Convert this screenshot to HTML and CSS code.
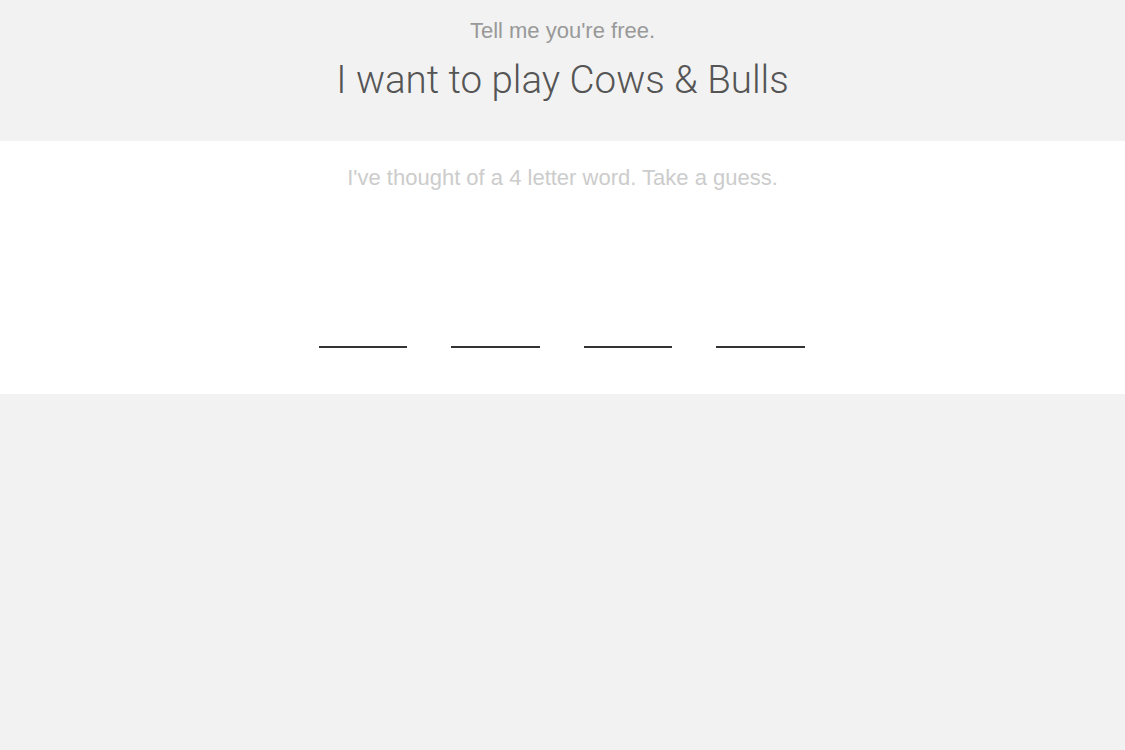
FILE: index.html
```html
<!DOCTYPE html>
<html>
<head>
<meta charset="utf-8">
<link rel="stylesheet" href="styles.css">
</head>
<body>
<header class="header">
  <p class="tagline">Tell me you're free.</p>
  <h1 class="title">I want to play Cows &amp; Bulls</h1>
</header>
<main class="game">
  <p class="prompt">I've thought of a 4 letter word. Take a guess.</p>
  <div class="slots">
    <span class="slot"></span>
    <span class="slot"></span>
    <span class="slot"></span>
    <span class="slot"></span>
  </div>
</main>
</body>
</html>
```
FILE: styles.css
```css
html, body {
  margin: 0;
  padding: 0;
  background: #f2f2f2;
  font-family: "Liberation Sans", Arial, sans-serif;
}
.header {
  height: 141px;
  box-sizing: border-box;
  padding-top: 17px;
  text-align: center;
}
.tagline {
  margin: 0;
  font-size: 22px;
  line-height: 28px;
  color: #999;
}
.title {
  margin: 11px 0 0;
  font-family: Roboto, "Liberation Sans", sans-serif;
  font-weight: 300;
  font-size: 38.5px;
  line-height: 48px;
  color: #555;
}
.game {
  background: #fff;
  height: 253px;
  box-sizing: border-box;
  padding-top: 23px;
  text-align: center;
}
.prompt {
  margin: 0;
  font-size: 22px;
  line-height: 28px;
  color: #ccc;
}
.slots {
  display: flex;
  justify-content: center;
  gap: 44px;
  margin-top: 154px;
  padding-right: 2px;
}
.slot {
  display: block;
  width: 88.5px;
  height: 2px;
  background: #333;
}
```
